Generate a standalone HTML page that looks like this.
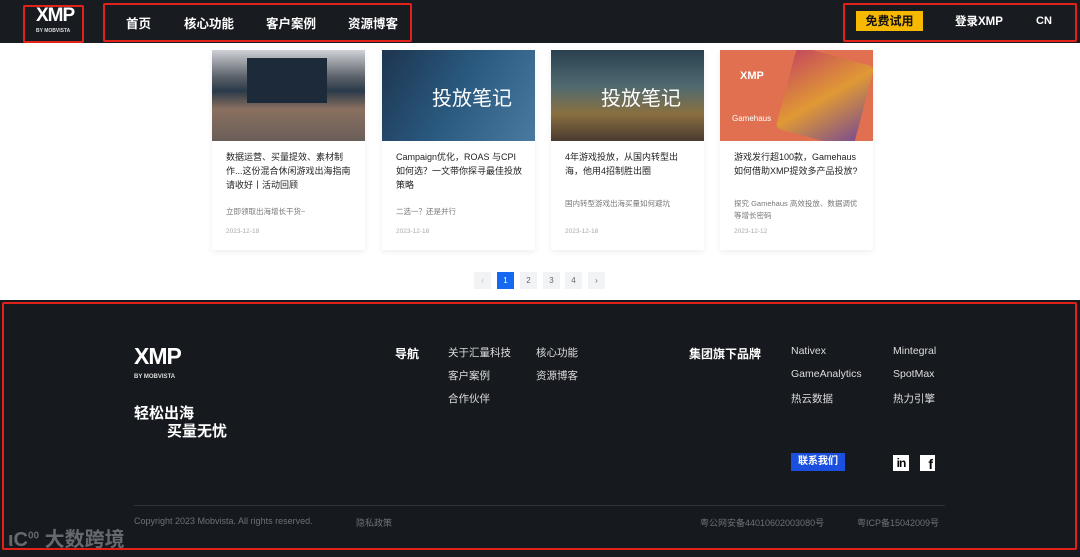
<!DOCTYPE html>
<html><head><meta charset="utf-8"><style>
*{margin:0;padding:0;box-sizing:border-box}
body{width:1080px;height:557px;overflow:hidden;background:#fff;font-family:"Liberation Sans","Noto Sans CJK SC",sans-serif;position:relative}
.a{position:absolute}
.hdr{left:0;top:0;width:1080px;height:43px;background:#181b20}
.rb{position:absolute;border:2px solid #e0221b;border-radius:2px}
.nav{color:#fff;font-size:12.5px;font-weight:bold;top:13px}
.card{top:50px;width:153px;height:200px;background:#fff;box-shadow:0 2px 6px rgba(0,0,0,.07)}
.card .img{height:91px;position:relative;overflow:hidden}
.card .t{position:absolute;left:14px;top:100px;width:130px;font-size:9px;line-height:14px;color:#222}
.card .s{position:absolute;left:14px;font-size:7.5px;line-height:12px;color:#777;width:130px}
.card .d{position:absolute;left:14px;top:178px;font-size:6.5px;color:#aaa}
.pg{top:272px;width:17px;height:17px;background:#f2f3f5;color:#666;font-size:8px;text-align:center;line-height:17px}
.ft{left:0;top:300px;width:1080px;height:257px;background:#16191e}
.fw{color:#ddd;font-size:10.5px}
.fb{color:#fff;font-size:12px;font-weight:bold}
.sm{color:#6d7178;font-size:9px;top:516px}
</style></head><body>
<div class="a hdr"></div>
<div class="a" style="left:36px;top:6px;color:#fff;font-weight:bold;font-size:19px;letter-spacing:-1px;line-height:19px">XMP</div>
<div class="a" style="left:36px;top:28px;color:#ddd;font-size:5px;font-weight:bold">BY MOBVISTA</div>
<div class="rb" style="left:23px;top:5px;width:61px;height:38px"></div>
<div class="a nav" style="left:126px">首页</div>
<div class="a nav" style="left:184px">核心功能</div>
<div class="a nav" style="left:266px">客户案例</div>
<div class="a nav" style="left:348px">资源博客</div>
<div class="rb" style="left:103px;top:3px;width:309px;height:39px"></div>
<div class="a" style="left:856px;top:11px;width:67px;height:20px;background:#f6b800;color:#111;font-size:12px;font-weight:bold;text-align:center;line-height:20px">免费试用</div>
<div class="a nav" style="left:955px;font-size:11.5px">登录XMP</div>
<div class="a nav" style="left:1036px;font-size:11px;top:15px">CN</div>
<div class="rb" style="left:843px;top:3px;width:234px;height:39px"></div>

<div class="a card" style="left:212px"><div class="img" style="background:linear-gradient(180deg,#cfd2d6 0%,#5a6068 30%,#2a3a4a 45%,#8a7060 65%,#6a5e58 100%)"><div class="a" style="left:35px;top:8px;width:80px;height:45px;background:#1c2a3a"></div></div>
<div class="t" style="top:100px">数据运营、买量提效、素材制作...这份混合休闲游戏出海指南请收好丨活动回顾</div><div class="s" style="top:156px">立即领取出海增长干货~</div><div class="d">2023-12-18</div></div>
<div class="a card" style="left:382px"><div class="img" style="background:linear-gradient(120deg,#1d3550,#2a5a80 50%,#4a7aa0)"><div class="a" style="left:50px;top:32px;color:#fff;font-size:20px">投放笔记</div></div>
<div class="t">Campaign优化，ROAS 与CPI 如何选？一文带你探寻最佳投放策略</div><div class="s" style="top:156px">二选一？还是并行</div><div class="d">2023-12-18</div></div>
<div class="a card" style="left:551px"><div class="img" style="background:linear-gradient(180deg,#2a4050,#506a70 40%,#8a7040 70%,#4a3a30)"><div class="a" style="left:50px;top:32px;color:#fff;font-size:20px">投放笔记</div></div>
<div class="t">4年游戏投放，从国内转型出海，他用4招制胜出圈</div><div class="s" style="top:148px">国内转型游戏出海买量如何避坑</div><div class="d">2023-12-18</div></div>
<div class="a card" style="left:720px"><div class="img" style="background:#e07050"><div class="a" style="left:20px;top:20px;color:#fff;font-weight:bold;font-size:11px">XMP</div><div class="a" style="left:12px;top:64px;color:#fff;font-size:8px">Gamehaus</div><div class="a" style="left:65px;top:5px;width:80px;height:85px;background:linear-gradient(135deg,#c04060,#e0a030,#6040a0);transform:rotate(15deg);border-radius:6px;opacity:.85"></div></div>
<div class="t">游戏发行超100款，Gamehaus如何借助XMP提效多产品投放?</div><div class="s" style="top:148px">探究 Gamehaus 高效投放、数据调优等增长密码</div><div class="d">2023-12-12</div></div>

<div class="a pg" style="left:474px;color:#bbb">‹</div>
<div class="a pg" style="left:497px;background:#1668f0;color:#fff">1</div>
<div class="a pg" style="left:520px">2</div>
<div class="a pg" style="left:543px">3</div>
<div class="a pg" style="left:565px">4</div>
<div class="a pg" style="left:588px">›</div>

<div class="a ft"></div>
<div class="a" style="left:134px;top:345px;color:#fff;font-weight:bold;font-size:23px;letter-spacing:-1px;line-height:23px">XMP</div>
<div class="a" style="left:134px;top:374px;color:#ddd;font-size:6px;font-weight:bold">BY MOBVISTA</div>
<div class="a fb" style="left:134px;top:405px;font-size:15px;line-height:17px">轻松出海</div>
<div class="a fb" style="left:167px;top:423px;font-size:15px;line-height:17px">买量无忧</div>
<div class="a fb" style="left:395px;top:345px">导航</div>
<div class="a fw" style="left:448px;top:345px">关于汇量科技</div>
<div class="a fw" style="left:448px;top:368px">客户案例</div>
<div class="a fw" style="left:448px;top:391px">合作伙伴</div>
<div class="a fw" style="left:536px;top:345px">核心功能</div>
<div class="a fw" style="left:536px;top:368px">资源博客</div>
<div class="a fb" style="left:689px;top:345px">集团旗下品牌</div>
<div class="a fw" style="left:791px;top:345px">Nativex</div>
<div class="a fw" style="left:791px;top:368px">GameAnalytics</div>
<div class="a fw" style="left:791px;top:391px">热云数据</div>
<div class="a fw" style="left:893px;top:345px">Mintegral</div>
<div class="a fw" style="left:893px;top:368px">SpotMax</div>
<div class="a fw" style="left:893px;top:391px">热力引擎</div>
<div class="a" style="left:791px;top:453px;width:54px;height:18px;background:#1b4fe0;color:#fff;font-size:10px;font-weight:bold;text-align:center;line-height:18px">联系我们</div>
<div class="a" style="left:893px;top:455px;width:16px;height:16px;background:#fff;color:#000;font-weight:bold;font-size:12px;line-height:17px;text-align:center;letter-spacing:-1px">in</div>
<div class="a" style="left:920px;top:455px;width:15px;height:16px;background:#fff;color:#000;font-weight:bold;font-size:14px;line-height:18px;text-align:right;padding-right:2px">f</div>
<div class="a" style="left:134px;top:505px;width:811px;height:1px;background:#2e3238"></div>
<div class="a sm" style="left:134px">Copyright 2023 Mobvista. All rights reserved.</div>
<div class="a sm" style="left:356px">隐私政策</div>
<div class="a sm" style="left:700px">粤公网安备44010602003080号</div>
<div class="a sm" style="left:857px">粤ICP备15042009号</div>
<div class="rb" style="left:2px;top:302px;width:1075px;height:248px"></div>
<div class="a" style="left:8px;top:523px;color:#7a7d82;font-size:20px;font-weight:bold;opacity:.8">ιC<sup style="font-size:10px">00</sup> 大数跨境</div>
</body></html>
